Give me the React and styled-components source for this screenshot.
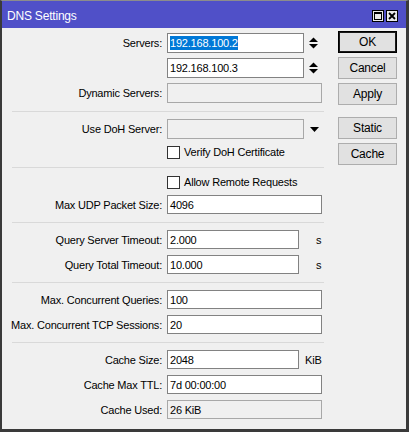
import React from "react";
import styled, { createGlobalStyle } from "styled-components";

const Global = createGlobalStyle`
  html, body { margin: 0; padding: 0; background: #f0f0f0; }
  body { font-family: "Liberation Sans", Arial, sans-serif; }
`;

const Window = styled.div`
  width: 409px;
  height: 432px;
  box-sizing: border-box;
  border-top: 1px solid #8c8c8c;
  border-left: 2px solid #3a3a3a;
  border-right: 3px solid #3a3a3a;
  border-bottom: 3px solid #3a3a3a;
  background: #f0f0f0;
  display: flex;
  flex-direction: column;
  font-size: 11px;
  letter-spacing: -0.2px;
  color: #000;
`;

const TitleBar = styled.div`
  height: 27px;
  flex-shrink: 0;
  background: #5050c8;
  display: flex;
  align-items: center;
  padding: 0 8px 0 5px;
`;

const Title = styled.div`
  color: #fff;
  font-size: 12px;
  flex: 1;
  padding-top: 2px;
`;

const TitleButtons = styled.div`
  display: flex;
  gap: 2px;
  padding-top: 3px;
`;

const TitleButton = styled.div`
  width: 12px;
  height: 12px;
  box-sizing: border-box;
  border: 1px solid #000;
  background: #eaeaea;
  display: flex;
  align-items: center;
  justify-content: center;
`;

const Body = styled.div`
  flex: 1;
  display: flex;
`;

const Form = styled.div`
  width: 336px;
  padding-top: 5px;
  display: flex;
  flex-direction: column;
`;

const Group = styled.div`
  display: flex;
  flex-direction: column;
  gap: ${(p) => p.$gap ?? 6}px;
`;

const Separator = styled.div`
  height: 1px;
  background: #d9d9d9;
  margin: 8px 14px 7px 10px;
`;

const Row = styled.div`
  display: flex;
  align-items: center;
  height: ${(p) => p.$h ?? 19}px;
`;

const Label = styled.div`
  width: 160px;
  flex-shrink: 0;
  margin-right: 5px;
  text-align: right;
  white-space: nowrap;
`;

const Field = styled.div`
  width: ${(p) => p.$w}px;
  height: 100%;
  box-sizing: border-box;
  border: 1px solid ${(p) => (p.$disabled ? "#a8a8a8" : "#828282")};
  background: ${(p) => (p.$disabled ? "#f0f0f0" : "#fff")};
  padding: 0 2px;
  display: flex;
  align-items: center;
  white-space: nowrap;
  overflow: hidden;
`;

const Selected = styled.span`
  background: #0078d7;
  color: #fff;
  padding: 1px 0;
`;

const Unit = styled.div`
  margin-left: ${(p) => p.$ml}px;
`;

const Adorn = styled.div`
  margin-left: ${(p) => p.$ml}px;
  display: flex;
  align-items: center;
`;

const CheckRow = styled.div`
  display: flex;
  align-items: center;
  height: 14px;
  padding-left: 165px;
`;

const Box = styled.div`
  width: 13px;
  height: 13px;
  box-sizing: border-box;
  border: 1px solid #333;
  background: #fff;
  margin-right: 4px;
`;

const Buttons = styled.div`
  display: flex;
  flex-direction: column;
  gap: 4px;
  margin-top: 3px;
`;

const Button = styled.div`
  width: 59px;
  height: 22px;
  box-sizing: border-box;
  background: #e1e1e1;
  border: 1px solid ${(p) => (p.$default ? "#000" : "#adadad")};
  box-shadow: ${(p) => (p.$default ? "inset 0 0 0 1px #1a1a1a" : "none")};
  display: flex;
  align-items: center;
  justify-content: center;
  font-size: 12px;
  margin-top: ${(p) => p.$mt ?? 0}px;
`;

const Spinner = () => (
  <svg width="9" height="12" viewBox="0 0 9 12">
    <polygon points="0,5 4.5,0.5 9,5" fill="#000" />
    <polygon points="0,7 4.5,11.5 9,7" fill="#000" />
  </svg>
);

const DropArrow = () => (
  <svg width="9" height="5" viewBox="0 0 9 5">
    <polygon points="0,0 9,0 4.5,5" fill="#000" />
  </svg>
);

const MaxIcon = () => (
  <svg width="8" height="8" viewBox="0 0 8 8">
    <rect x="0.5" y="0.5" width="7" height="7" fill="none" stroke="#000" />
    <rect x="0" y="0" width="8" height="2" fill="#000" />
  </svg>
);

const CloseIcon = () => (
  <svg width="8" height="8" viewBox="0 0 8 8">
    <path d="M1 1 L7 7 M7 1 L1 7" stroke="#000" strokeWidth="1.8" />
  </svg>
);

export default function App() {
  return (
    <>
      <Global />
      <Window>
        <TitleBar>
          <Title>DNS Settings</Title>
          <TitleButtons>
            <TitleButton>
              <MaxIcon />
            </TitleButton>
            <TitleButton>
              <CloseIcon />
            </TitleButton>
          </TitleButtons>
        </TitleBar>
        <Body>
          <Form>
            <Group $gap={5}>
              <Row $h={20}>
                <Label>Servers:</Label>
                <Field $w={137}>
                  <Selected>192.168.100.2</Selected>
                </Field>
                <Adorn $ml={5}>
                  <Spinner />
                </Adorn>
              </Row>
              <Row $h={20}>
                <Label />
                <Field $w={137}>192.168.100.3</Field>
                <Adorn $ml={5}>
                  <Spinner />
                </Adorn>
              </Row>
              <Row $h={20}>
                <Label>Dynamic Servers:</Label>
                <Field $w={155} $disabled />
              </Row>
            </Group>
            <Separator />
            <Group>
              <Row $h={20}>
                <Label>Use DoH Server:</Label>
                <Field $w={137} $disabled />
                <Adorn $ml={6}>
                  <DropArrow />
                </Adorn>
              </Row>
              <CheckRow>
                <Box />
                Verify DoH Certificate
              </CheckRow>
            </Group>
            <Separator />
            <Group>
              <CheckRow>
                <Box />
                Allow Remote Requests
              </CheckRow>
              <Row>
                <Label>Max UDP Packet Size:</Label>
                <Field $w={155}>4096</Field>
              </Row>
            </Group>
            <Separator />
            <Group>
              <Row>
                <Label>Query Server Timeout:</Label>
                <Field $w={132}>2.000</Field>
                <Unit $ml={17}>s</Unit>
              </Row>
              <Row>
                <Label>Query Total Timeout:</Label>
                <Field $w={132}>10.000</Field>
                <Unit $ml={17}>s</Unit>
              </Row>
            </Group>
            <Separator />
            <Group>
              <Row>
                <Label>Max. Concurrent Queries:</Label>
                <Field $w={155}>100</Field>
              </Row>
              <Row>
                <Label>Max. Concurrent TCP Sessions:</Label>
                <Field $w={155}>20</Field>
              </Row>
            </Group>
            <Separator />
            <Group>
              <Row>
                <Label>Cache Size:</Label>
                <Field $w={132}>2048</Field>
                <Unit $ml={6}>KiB</Unit>
              </Row>
              <Row>
                <Label>Cache Max TTL:</Label>
                <Field $w={155}>7d 00:00:00</Field>
              </Row>
              <Row>
                <Label>Cache Used:</Label>
                <Field $w={155} $disabled>
                  26 KiB
                </Field>
              </Row>
            </Group>
          </Form>
          <Buttons>
            <Button $default>OK</Button>
            <Button>Cancel</Button>
            <Button>Apply</Button>
            <Button $mt={8}>Static</Button>
            <Button>Cache</Button>
          </Buttons>
        </Body>
      </Window>
    </>
  );
}
